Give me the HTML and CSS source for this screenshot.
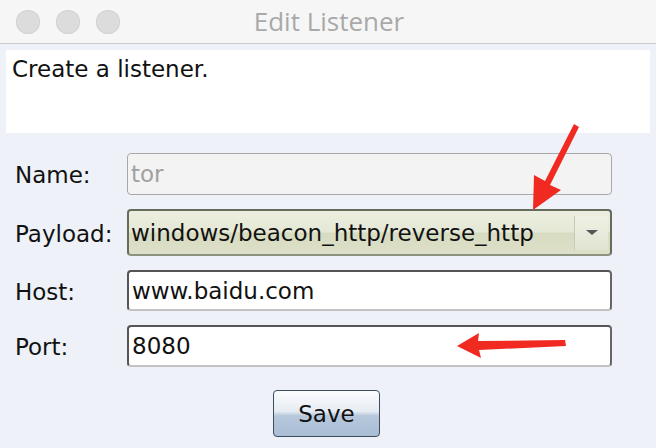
FILE: index.html
```html
<!DOCTYPE html>
<html>
<head>
<meta charset="utf-8">
<link rel="stylesheet" href="styles.css">
</head>
<body>
<div class="window">
  <div class="titlebar">
    <div class="lights">
      <span class="light"></span>
      <span class="light"></span>
      <span class="light"></span>
    </div>
    <div class="title">Edit Listener</div>
  </div>
  <div class="content">
    <div class="desc">Create a listener.</div>
    <div class="form">
      <label class="label">Name:</label>
      <div class="field field-disabled">tor</div>
      <label class="label">Payload:</label>
      <div class="field field-combo">
        <span class="combo-text">windows/beacon_http/reverse_http</span>
        <span class="combo-btn"><span class="tri"></span></span>
      </div>
      <label class="label">Host:</label>
      <div class="field field-text field-host">www.baidu.com</div>
      <label class="label">Port:</label>
      <div class="field field-text">8080</div>
    </div>
    <div class="actions">
      <button class="btn">Save</button>
    </div>
  </div>
  <svg class="annot" width="656" height="448" viewBox="0 0 656 448">
    <path d="M579 127 L550 185 L561 190 L533 210 L534 175 L545 181 L574 124 Z" fill="#f02a20"/>
    <path d="M566 346 L479 350 L481 358 L457 346 L479 333 L478 341 L565 340 Z" fill="#f02a20"/>
  </svg>
</div>
</body>
</html>
```

FILE: styles.css
```css
html, body {
  margin: 0;
  padding: 0;
}
body {
  width: 656px;
  height: 448px;
  overflow: hidden;
  background: #eef1f8;
  font-family: "DejaVu Sans", Verdana, sans-serif;
}
.window {
  position: relative;
  width: 656px;
  height: 448px;
}
.titlebar {
  height: 43px;
  background: #f6f6f6;
  border-bottom: 1px solid #cdcdcd;
  display: flex;
  align-items: center;
  position: relative;
}
.lights {
  display: flex;
  gap: 16px;
  padding-left: 16px;
}
.light {
  width: 24px;
  height: 24px;
  border-radius: 50%;
  background: #dcdcdc;
  box-shadow: inset 0 0 0 1px #d2d2d2;
}
.title {
  position: absolute;
  left: 0;
  right: 0;
  text-align: center;
  font-family: "Open Sans", "Liberation Sans", sans-serif;
  font-size: 26px;
  color: #a9a9a9;
  top: 3px;
  padding-left: 2px;
}
.content {
  padding: 6px 6px 0 6px;
}
.desc {
  height: 83px;
  background: #ffffff;
  box-sizing: border-box;
  padding: 6px 6px;
  font-size: 23px;
  color: #111;
}
.form {
  display: grid;
  grid-template-columns: 112px 485px;
  grid-template-rows: 42px 47px 41px 42px;
  row-gap: 14px;
  margin: 20px 0 0 9px;
  align-items: center;
}
.label {
  font-size: 23px;
  color: #111;
  padding-top: 2px;
}
.field {
  height: 100%;
  box-sizing: border-box;
  border-radius: 4px;
  display: flex;
  align-items: center;
  padding-left: 3px;
  font-size: 23px;
  color: #111;
}
.field-disabled {
  background: #f3f3f3;
  border: 1px solid #a8a8a8;
  color: #a0a0a0;
}
.field-combo {
  background: linear-gradient(#eceedf 0%, #e6e8d6 48%, #d7dbc0 52%, #dde0c8 100%);
  border: 2px solid #666b5c;
  border-bottom-color: #8d917f;
  padding-left: 2px;
  padding-right: 2px;
}
.combo-text {
  flex: 1;
}
.combo-btn {
  width: 34px;
  height: 34px;
  box-sizing: border-box;
  border-left: 1px solid #c8cab8;
  background: linear-gradient(#eef0e4, #e2e4d2);
  display: flex;
  align-items: center;
  justify-content: center;
}
.tri {
  width: 0;
  height: 0;
  border-left: 6px solid transparent;
  border-right: 6px solid transparent;
  border-top: 5px solid #555;
}
.field-text {
  background: #ffffff;
  border: 2px solid #555;
  border-bottom: 2px solid #c2c2c2;
  border-right-color: #666;
}
.actions {
  display: flex;
  justify-content: center;
  padding-top: 23px;
  padding-right: 3px;
}
.btn {
  width: 107px;
  height: 47px;
  border: 1px solid #3e4d5e;
  border-radius: 4px;
  background: linear-gradient(#fbfcfd 0%, #e6ecf3 45%, #b7c8dc 55%, #a9bdd5 100%);
  font-family: "DejaVu Sans", Verdana, sans-serif;
  font-size: 23px;
  color: #111;
  padding: 0;
}
.annot {
  position: absolute;
  left: 0;
  top: 0;
  pointer-events: none;
}
```
